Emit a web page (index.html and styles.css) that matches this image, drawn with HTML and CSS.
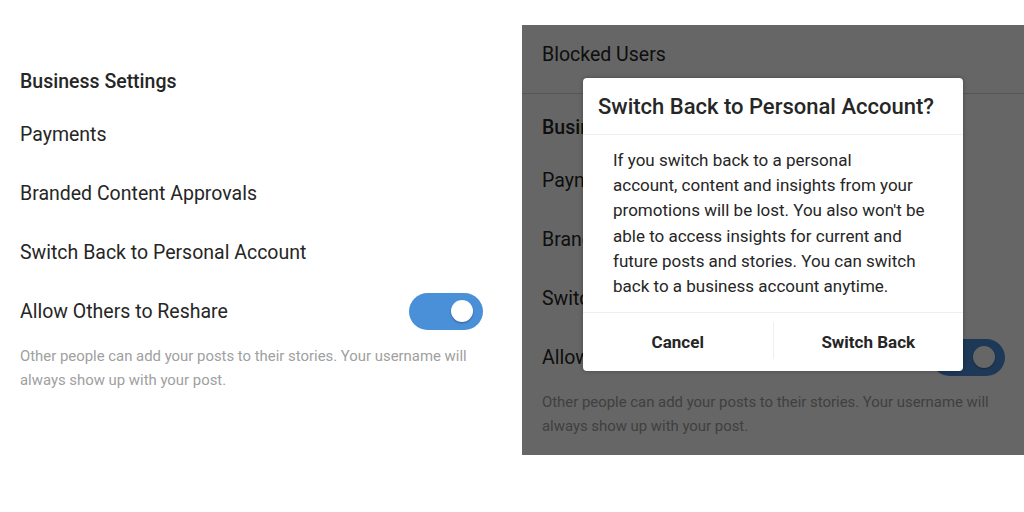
FILE: index.html
```html
<!DOCTYPE html>
<html lang="en">
<head>
    <meta charset="UTF-8">
    <meta name="viewport" content="width=device-width, initial-scale=1.0">
    <title>Business Settings</title>
    <link rel="stylesheet" href="styles.css">
</head>
<body>
    <div class="page">
        <!-- plain settings screen -->
        <section class="screen screen-plain">
            <div class="settings">
                <h2 class="section-title">Business Settings</h2>
                <div class="item">Payments</div>
                <div class="item">Branded Content Approvals</div>
                <div class="item">Switch Back to Personal Account</div>
                <div class="item">
                    <span>Allow Others to Reshare</span>
                    <span class="toggle"></span>
                </div>
                <p class="hint">Other people can add your posts to their stories. Your username will<br>always show up with your post.</p>
            </div>
        </section>

        <!-- same screen with the confirm dialog open -->
        <section class="screen screen-dimmed">
            <div class="blocked">Blocked Users</div>
            <div class="settings">
                <h2 class="section-title">Business Settings</h2>
                <div class="item">Payments</div>
                <div class="item">Branded Content Approvals</div>
                <div class="item">Switch Back to Personal Account</div>
                <div class="item">
                    <span>Allow Others to Reshare</span>
                    <span class="toggle"></span>
                </div>
                <p class="hint">Other people can add your posts to their stories. Your username will<br>always show up with your post.</p>
            </div>

            <div class="overlay">
                <div class="dialog">
                    <h3 class="dialog-title">Switch Back to Personal Account?</h3>
                    <p class="dialog-body">If you switch back to a personal<br>account, content and insights from your<br>promotions will be lost. You also won't be<br>able to access insights for current and<br>future posts and stories. You can switch<br>back to a business account anytime.</p>
                    <div class="dialog-actions">
                        <button class="dialog-btn">Cancel</button>
                        <span class="divider"></span>
                        <button class="dialog-btn">Switch Back</button>
                    </div>
                </div>
            </div>
        </section>
    </div>
</body>
</html>
```

FILE: styles.css
```css
body {
    margin: 0;
    font-family: Roboto, "Noto Sans", sans-serif;
    background: #fff;
    color: #262626;
}
.page {
    display: flex;
    gap: 20px;
    width: 1024px;
}
.screen {
    position: relative;
    width: 502px;
    background: #fff;
}
.screen-plain .settings {
    padding-top: 70px;
}
.screen-dimmed {
    margin-top: 25px;
    height: 430px;
    overflow: hidden;
}
.screen-dimmed .settings {
    padding-top: 22px;
}
.blocked {
    padding: 18px 20px 26px;
    font-size: 19.5px;
    line-height: 24px;
    border-bottom: 1px solid #d8d8d8;
}
.settings {
    padding: 0 19px 0 20px;
}
.section-title {
    margin: 0;
    padding-bottom: 11px;
    font-size: 19.5px;
    font-weight: 500;
    line-height: 24px;
}
.item {
    height: 59px;
    display: flex;
    align-items: center;
    justify-content: space-between;
    font-size: 19.5px;
}
.toggle {
    position: relative;
    width: 74px;
    height: 37px;
    border-radius: 19px;
    background: #4a90d9;
}
.toggle::after {
    content: "";
    position: absolute;
    top: 7px;
    right: 10px;
    width: 22px;
    height: 22px;
    border-radius: 50%;
    background: #fff;
    box-shadow: 0 1px 2px rgba(0, 0, 0, 0.35);
}
.hint {
    margin: 3px 0 0;
    font-size: 14.9px;
    line-height: 24px;
    color: #a0a0a0;
}
.overlay {
    position: absolute;
    top: 0;
    left: 0;
    right: 0;
    bottom: 0;
    display: flex;
    justify-content: center;
    align-items: flex-start;
    padding-top: 53px;
    background: rgba(0, 0, 0, 0.6);
}
.dialog {
    width: 380px;
    background: #fff;
    border-radius: 4px;
    box-shadow: 0 0 4px rgba(0, 0, 0, 0.3);
}
.dialog-title {
    margin: 0;
    height: 56px;
    padding-left: 15px;
    font-size: 22px;
    font-weight: 500;
    line-height: 57px;
    border-bottom: 1px solid #efefef;
}
.dialog-body {
    margin: 0;
    padding: 13px 30px;
    font-size: 17px;
    line-height: 25.2px;
}
.dialog-actions {
    display: flex;
    height: 58px;
    border-top: 1px solid #efefef;
}
.dialog-btn {
    flex: 1;
    border: none;
    background: none;
    font-family: inherit;
    font-size: 17px;
    font-weight: 700;
    color: #262626;
    padding: 0;
}
.divider {
    width: 1px;
    margin: 9px 0 12px;
    background: #efefef;
}
```
